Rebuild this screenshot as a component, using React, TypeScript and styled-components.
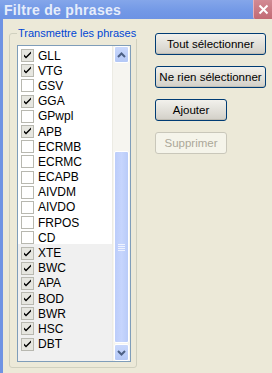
import styled, { createGlobalStyle } from 'styled-components';

const GlobalStyle = createGlobalStyle`
  html, body {
    margin: 0;
    padding: 0;
    background: #ece9d8;
  }
  body {
    font-family: Tahoma, "Liberation Sans", "DejaVu Sans", sans-serif;
    font-size: 11px;
  }
`;

interface Phrase {
  code: string;
  checked: boolean;
  selected?: boolean;
}

const phrases: Phrase[] = [
  { code: 'GLL', checked: true },
  { code: 'VTG', checked: true },
  { code: 'GSV', checked: false },
  { code: 'GGA', checked: true },
  { code: 'GPwpl', checked: false },
  { code: 'APB', checked: true },
  { code: 'ECRMB', checked: false },
  { code: 'ECRMC', checked: false },
  { code: 'ECAPB', checked: false },
  { code: 'AIVDM', checked: false },
  { code: 'AIVDO', checked: false },
  { code: 'FRPOS', checked: false },
  { code: 'CD', checked: false },
  { code: 'XTE', checked: true, selected: true },
  { code: 'BWC', checked: true, selected: true },
  { code: 'APA', checked: true, selected: true },
  { code: 'BOD', checked: true, selected: true },
  { code: 'BWR', checked: true, selected: true },
  { code: 'HSC', checked: true, selected: true },
  { code: 'DBT', checked: true, selected: true },
];

const Window = styled.div`
  width: 272px;
  height: 373px;
  display: flex;
  flex-direction: column;
  background: #ece9d8;
  overflow: hidden;
`;

const TitleBar = styled.div`
  height: 19px;
  flex: none;
  display: flex;
  align-items: center;
  justify-content: space-between;
  background: linear-gradient(to bottom, #84a6ea 0%, #7298e6 60%, #6d93e4 100%);
  padding-left: 4px;
`;

const Title = styled.span`
  color: #e6edfb;
  font-weight: bold;
  font-size: 14px;
  letter-spacing: 0.3px;
`;

const CloseButton = styled.div`
  width: 18px;
  height: 19px;
  align-self: flex-start;
  background: linear-gradient(to bottom, #d28a94, #c26a74);
  border-left: 1px solid #e8b0b8;
  border-bottom-left-radius: 2px;
  display: flex;
  align-items: center;
  justify-content: center;
`;

const Body = styled.div`
  flex: 1;
  min-height: 0;
  display: flex;
  border-left: 3px solid #6f93e3;
  padding: 8px 0 5px 6px;
  gap: 18px;
`;

const GroupBox = styled.fieldset`
  margin: 0;
  width: 128px;
  min-width: 0;
  box-sizing: border-box;
  border: 1px solid #d0d0bf;
  border-radius: 3px;
  padding: 6px 5px 5px 7px;
  display: flex;
  flex-direction: column;
`;

const Legend = styled.legend`
  color: #0046d5;
  padding: 0 1px;
  margin-left: 0;
  font-size: 11px;
  white-space: nowrap;
`;

const ListBox = styled.div`
  flex: 1;
  min-height: 0;
  display: flex;
  border: 1px solid #7f9db9;
  background: #ffffff;
`;

const Items = styled.div`
  flex: 1;
  display: flex;
  flex-direction: column;
  padding-top: 2px;
  background: linear-gradient(to bottom, #ffffff 0, #ffffff 198px, #f0f0f0 198px);
`;

const Row = styled.div<{ $selected?: boolean }>`
  height: 15.2px;
  flex: none;
  display: flex;
  align-items: center;
  gap: 4px;
  padding-left: 3px;
  background: ${({ $selected }) => ($selected ? '#f0f0f0' : 'transparent')};
  color: #000000;
  font-size: 12px;
`;

const Box = styled.span<{ $checked: boolean }>`
  width: 11px;
  height: 11px;
  flex: none;
  border: 1px solid #b8b8b0;
  background: ${({ $checked }) => ($checked ? '#e6e6e0' : '#ffffff')};
  display: flex;
  align-items: center;
  justify-content: center;
`;

const ScrollBar = styled.div`
  width: 17px;
  flex: none;
  display: flex;
  flex-direction: column;
  background: #f6f5f0;
  border-left: 1px solid #ecebe4;
`;

const ArrowButton = styled.div`
  height: 15px;
  flex: none;
  margin: 0 1px;
  border: 1px solid #ffffff;
  border-radius: 2px;
  background: linear-gradient(to bottom, #c9d8fc, #b4c8f6);
  display: flex;
  align-items: center;
  justify-content: center;
`;

const Track = styled.div`
  flex: 1;
  display: flex;
  flex-direction: column;
  justify-content: flex-end;
  padding-bottom: 1px;
`;

const Thumb = styled.div`
  height: 190px;
  margin: 0 1px;
  border: 1px solid #ffffff;
  border-radius: 2px;
  background: linear-gradient(to right, #bccdfa, #c6d5fd 50%, #b9cbf8);
  display: flex;
  align-items: center;
  justify-content: center;
`;

const Buttons = styled.div`
  display: flex;
  flex-direction: column;
  align-items: flex-start;
  padding-top: 6px;
  gap: 11px;
`;

const Button = styled.button<{ $width: number }>`
  width: ${({ $width }) => $width}px;
  height: 22px;
  padding: 0;
  font-family: inherit;
  font-size: 11.5px;
  white-space: nowrap;
  color: #000000;
  border: 1px solid #003c74;
  border-radius: 3px;
  background: linear-gradient(to bottom, #f2f1ec, #dcdad3 70%, #d2cfc7);
  box-shadow: inset 0 -1px 0 #c0bdb3;
  &:disabled {
    color: #aca899;
    border-color: #c9c7ba;
    background: #f5f4ea;
    box-shadow: none;
  }
`;

const Check = () => (
  <svg width="9" height="9" viewBox="0 0 9 9">
    <path d="M1 3.5 L1 5.5 L3 7.5 L8 2.5 L8 0.5 L3 5.5 Z" fill="#000000" />
  </svg>
);

export default function App() {
  return (
    <>
      <GlobalStyle />
      <Window>
        <TitleBar>
          <Title>Filtre de phrases</Title>
          <CloseButton>
            <svg width="11" height="11" viewBox="0 0 11 11">
              <path d="M1.5 1.5 L9.5 9.5 M9.5 1.5 L1.5 9.5" stroke="#ffffff" strokeWidth="2" />
            </svg>
          </CloseButton>
        </TitleBar>
        <Body>
          <GroupBox>
            <Legend>Transmettre les phrases</Legend>
            <ListBox>
              <Items>
                {phrases.map((p) => (
                  <Row key={p.code} $selected={p.selected}>
                    <Box $checked={p.checked}>{p.checked && <Check />}</Box>
                    {p.code}
                  </Row>
                ))}
              </Items>
              <ScrollBar>
                <ArrowButton>
                  <svg width="9" height="6" viewBox="0 0 9 6">
                    <path d="M1 5 L4.5 1.5 L8 5" fill="none" stroke="#4d6185" strokeWidth="2" />
                  </svg>
                </ArrowButton>
                <Track>
                  <Thumb>
                    <svg width="7" height="8" viewBox="0 0 7 8">
                      <path d="M0 1.5 H7 M0 3.5 H7 M0 5.5 H7 M0 7.5 H7" stroke="#eef2fe" strokeWidth="1" />
                    </svg>
                  </Thumb>
                </Track>
                <ArrowButton>
                  <svg width="9" height="6" viewBox="0 0 9 6">
                    <path d="M1 1 L4.5 4.5 L8 1" fill="none" stroke="#4d6185" strokeWidth="2" />
                  </svg>
                </ArrowButton>
              </ScrollBar>
            </ListBox>
          </GroupBox>
          <Buttons>
            <Button $width={111}>Tout sélectionner</Button>
            <Button $width={111}>Ne rien sélectionner</Button>
            <Button $width={72}>Ajouter</Button>
            <Button $width={72} disabled>Supprimer</Button>
          </Buttons>
        </Body>
      </Window>
    </>
  );
}
